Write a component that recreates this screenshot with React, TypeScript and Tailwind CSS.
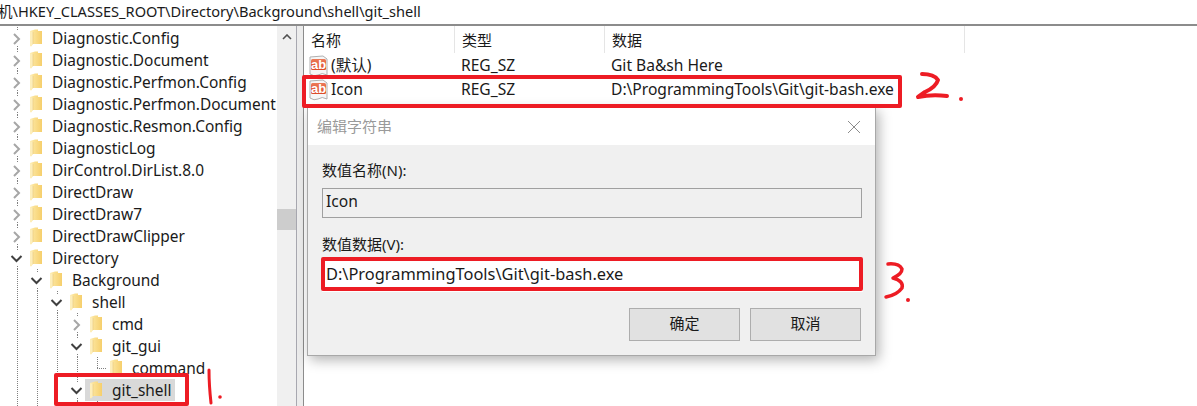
import React from "react";

const FONT = '"Noto Sans", "Noto Sans CJK SC", sans-serif';

type Row = { name: string; level: number; open?: boolean; leaf?: boolean; sel?: boolean };

const rows: Row[] = [
  { name: "Diagnostic.Config", level: 0 },
  { name: "Diagnostic.Document", level: 0 },
  { name: "Diagnostic.Perfmon.Config", level: 0 },
  { name: "Diagnostic.Perfmon.Document", level: 0 },
  { name: "Diagnostic.Resmon.Config", level: 0 },
  { name: "DiagnosticLog", level: 0 },
  { name: "DirControl.DirList.8.0", level: 0 },
  { name: "DirectDraw", level: 0 },
  { name: "DirectDraw7", level: 0 },
  { name: "DirectDrawClipper", level: 0 },
  { name: "Directory", level: 0, open: true },
  { name: "Background", level: 1, open: true },
  { name: "shell", level: 2, open: true },
  { name: "cmd", level: 3 },
  { name: "git_gui", level: 3, open: true },
  { name: "command", level: 4, leaf: true },
  { name: "git_shell", level: 3, open: true, sel: true },
  { name: "command", level: 4, leaf: true },
];

function Guide() {
  return (
    <svg width="20" height="22" className="shrink-0">
      <line x1="10.5" y1="0" x2="10.5" y2="22" stroke="#808080" strokeDasharray="1 1" />
    </svg>
  );
}

function Connector() {
  return (
    <svg width="20" height="22" className="shrink-0">
      <line x1="10.5" y1="0" x2="10.5" y2="11" stroke="#808080" strokeDasharray="1 1" />
      <line x1="10" y1="11.5" x2="20" y2="11.5" stroke="#808080" strokeDasharray="1 1" />
    </svg>
  );
}

function Chevron({ open }: { open?: boolean }) {
  return (
    <svg width="20" height="22" className="shrink-0">
      <line x1="10.5" y1="0" x2="10.5" y2="3" stroke="#808080" strokeDasharray="1 1" />
      <line x1="10.5" y1="19" x2="10.5" y2="22" stroke="#808080" strokeDasharray="1 1" />
      {open ? (
        <path d="M4.5 9 L9.5 14 L14.5 9" fill="none" stroke="#404040" strokeWidth="2" />
      ) : (
        <path d="M7 7 L12 12 L7 17" fill="none" stroke="#a6a6a6" strokeWidth="2" />
      )}
    </svg>
  );
}

function Folder() {
  return (
    <svg width="12" height="18" viewBox="0 0 12 18" className="shrink-0">
      <defs>
        <linearGradient id="fg" x1="0" x2="1" y1="0" y2="0">
          <stop offset="0" stopColor="#fdeaa8" />
          <stop offset="1" stopColor="#f6cf6c" />
        </linearGradient>
      </defs>
      <path d="M0 2 L5 0.5 L8 0.5 L8 2 L12 2 L12 15 L3 15 L1 17.5 L0 16.5 Z" fill="url(#fg)" />
      <path d="M0 2 L3 3 L3 15 L1 17.5 L0 16.5 Z" fill="#fdeebb" />
      <path d="M3 3 L3 15" stroke="#e8c878" strokeWidth="0.6" />
    </svg>
  );
}

function TreeRow({ r }: { r: Row }) {
  return (
    <div className="flex h-[22px] shrink-0 items-center pl-[7px]">
      {Array.from({ length: r.level }).map((_, i) => (
        <Guide key={i} />
      ))}
      {r.leaf ? <Connector /> : <Chevron open={r.open} />}
      <div className={r.sel ? "-ml-[2px] flex h-[22px] items-center bg-[#d9d9d9] pr-[3px]" : "-ml-[2px] flex h-[22px] items-center"}>
        <div className="ml-[5px]">
          <Folder />
        </div>
        <span className="ml-[10px] whitespace-nowrap text-[15.45px] leading-[22px] text-[#1a1a1a]">{r.name}</span>
      </div>
    </div>
  );
}

function RegIcon() {
  return (
    <svg width="20" height="22" viewBox="0 0 20 22" className="shrink-0">
      <defs>
        <linearGradient id="rg" x1="0" x2="0" y1="0" y2="1">
          <stop offset="0" stopColor="#ec7a58" />
          <stop offset="1" stopColor="#dc4a28" />
        </linearGradient>
      </defs>
      <path d="M1 2 L14 1 L18 4 L18 20 Q13 17 9 20 Q5 22 1 19 Z" fill="#f6f6f6" stroke="#b0b0b0" />
      <rect x="2" y="4" width="15" height="11" rx="1.5" fill="url(#rg)" />
      <text x="9.5" y="13.5" textAnchor="middle" fontSize="13" fontWeight="700" fill="#fff" fontFamily='"Liberation Sans", sans-serif'>ab</text>
    </svg>
  );
}

function HeaderCell({ w, label }: { w: string; label: string }) {
  return (
    <div className={`${w} flex h-[27px] shrink-0 items-center border-r border-[#e5e5e5] pl-[7px] pt-[2px] text-[15px] text-[#1a1a1a]`}>{label}</div>
  );
}

function ValueRow({ name, data }: { name: string; data: string }) {
  return (
    <div className="flex h-[24px] items-center pt-[1px] text-[15.6px] text-[#1a1a1a]">
      <div className="flex w-[151px] shrink-0 items-center gap-[2px] pl-[5px]">
        <RegIcon />
        <span>{name}</span>
      </div>
      <div className="w-[150px] shrink-0 pl-[6px]">REG_SZ</div>
      <div className="whitespace-nowrap pl-[6px]">{data}</div>
    </div>
  );
}

function Dialog() {
  return (
    <div className="absolute left-[307px] top-[107px] h-[249px] w-[569px] border border-[#a8a8a8] bg-white shadow-[3px_4px_12px_rgba(0,0,0,0.3)]">
      <div className="flex h-[37px] items-center justify-between pl-[9px] pr-[14px] text-[15px] text-[#9a9a9a]">
        <span>编辑字符串</span>
        <svg width="14" height="14" viewBox="0 0 14 14">
          <path d="M1 1 L13 13 M13 1 L1 13" stroke="#8c8c8c" strokeWidth="1" fill="none" />
        </svg>
      </div>
      <div className="h-[210px] bg-[#f0f0f0] px-[14px] pt-[14px] text-[15px] text-[#1a1a1a]">
        <div className="h-[29px] leading-[22px]">数值名称(N):</div>
        <div className="flex h-[30px] w-[540px] items-center border border-[#a0a0a0] bg-[#f0f0f0] pb-[3px] pl-[3px] text-[15.6px]">Icon</div>
        <div className="mt-[15px] h-[22px] leading-[22px]">数值数据(V):</div>
        <div className="mt-[4px] flex h-[33px] w-[541px] items-center bg-white pb-[2px] pl-[4px] text-[16.4px]">D:\ProgrammingTools\Git\git-bash.exe</div>
        <div className="mt-[16px] flex w-[539px] justify-end gap-[10px]">
          <button className="h-[33px] w-[111px] border border-[#adadad] bg-[#e1e1e1] pb-[3px] text-[15px]">确定</button>
          <button className="h-[33px] w-[111px] border border-[#adadad] bg-[#e1e1e1] pb-[3px] text-[15px]">取消</button>
        </div>
      </div>
    </div>
  );
}

function Annotations() {
  return (
    <>
      <div className="absolute left-[54px] top-[373px] h-[33px] w-[135px] rounded-[2px] border-4 border-[#ed1c24]" />
      <div className="absolute left-[302px] top-[75px] h-[33px] w-[600px] rounded-[2px] border-4 border-[#ed1c24]" />
      <div className="absolute left-[321px] top-[257px] h-[34px] w-[542px] rounded-[2px] border-4 border-[#ed1c24]" />
      <svg width="1197" height="406" className="pointer-events-none absolute left-0 top-0">
        <g fill="none" stroke="#ed1c24" strokeLinecap="round" strokeLinejoin="round">
          <path d="M209 370 Q209 385 211 403" strokeWidth="3" />
          <path d="M922 74 Q934 74 938 80 Q936 87 925 92 L918 97 Q932 94 947 96" strokeWidth="4" />
          <path d="M888 264 Q899 263 902 269 Q902 274 893 278 Q904 281 902 288 Q897 295 886 297" strokeWidth="3.5" />
        </g>
        <g fill="#ed1c24">
          <circle cx="220" cy="397" r="1.8" />
          <circle cx="961" cy="99" r="2" />
          <circle cx="908" cy="300" r="2" />
        </g>
      </svg>
    </>
  );
}

export default function App() {
  return (
    <div className="relative h-[406px] w-[1197px] overflow-hidden bg-white" style={{ fontFamily: FONT }}>
      <div className="flex h-[24px] items-center overflow-hidden whitespace-nowrap pb-[1px] text-[14.6px] text-[#1a1a1a]">
        <span className="-ml-[2px]">机\HKEY_CLASSES_ROOT\Directory\Background\shell\git_shell</span>
      </div>
      <div className="flex h-[382px] border-t-2 border-[#8c8c8c]">
        <div className="flex h-full w-[296px] shrink-0">
          <div className="flex w-[277px] shrink-0 flex-col overflow-hidden pt-[1px]">
            {rows.map((r, i) => (
              <TreeRow key={i} r={r} />
            ))}
          </div>
          <div className="flex w-[19px] flex-col bg-[#f0f0f0]">
            <div className="flex h-[22px] items-center justify-center">
              <svg width="10" height="6" viewBox="0 0 10 6">
                <path d="M1 5 L5 1 L9 5" fill="none" stroke="#505050" strokeWidth="1.6" />
              </svg>
            </div>
            <div className="mt-[161px] h-[21px] bg-[#cdcdcd]" />
          </div>
        </div>
        <div className="h-full w-[8px] shrink-0 border-l border-r border-l-[#a8a8b0] border-r-[#8c8c8c] bg-[#ececec]" />
        <div className="flex-1 overflow-hidden">
          <div className="flex">
            <HeaderCell w="w-[151px]" label="名称" />
            <HeaderCell w="w-[150px]" label="类型" />
            <HeaderCell w="w-[360px]" label="数据" />
          </div>
          <ValueRow name="(默认)" data="Git Ba&sh Here" />
          <ValueRow name="Icon" data="D:\ProgrammingTools\Git\git-bash.exe" />
        </div>
      </div>
      <Dialog />
      <Annotations />
    </div>
  );
}
